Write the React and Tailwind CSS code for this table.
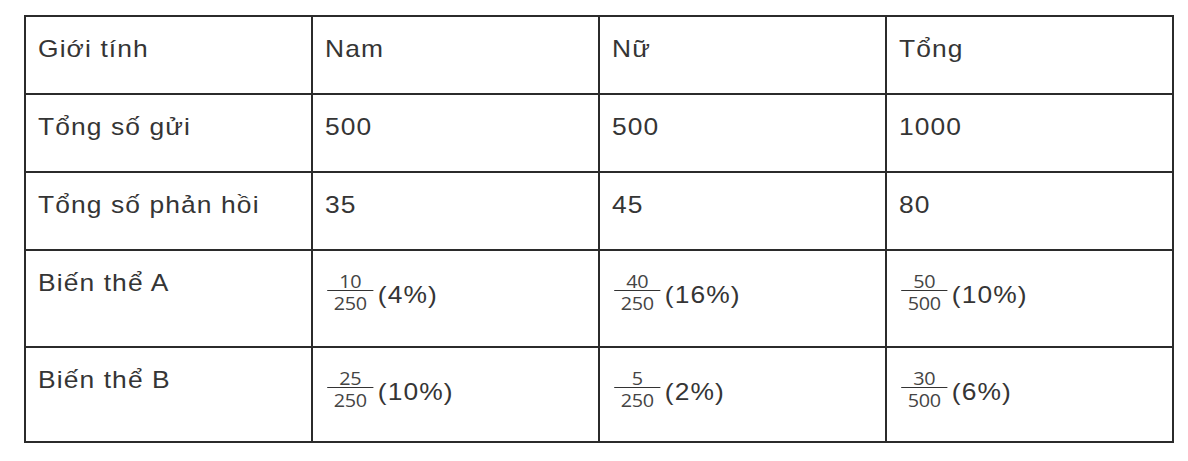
import React from "react";

const font = { fontFamily: '"Liberation Sans", Arial, sans-serif' };

function Frac({ n, d }) {
  return (
    <span className="mt-[3px] ml-[2px] inline-flex flex-col items-stretch font-['Open_Sans',sans-serif] text-[18px] tracking-[-0.3px] text-[#444]">
      <span className="px-[6px] text-center leading-[18px]">{n}</span>
      <span className="border-t border-[#333] px-[6px] pt-[3px] text-center leading-[18px]">{d}</span>
    </span>
  );
}

function FracCell({ n, d, pct }) {
  return (
    <div className="flex items-start">
      <Frac n={n} d={d} />
      <span className="ml-[4px] mt-[12px] leading-[27.6px]">{pct}</span>
    </div>
  );
}

const rows = [
  { h: "h-[78px]", cells: ["Giới tính", "Nam", "Nữ", "Tổng"] },
  { h: "h-[78px]", cells: ["Tổng số gửi", "500", "500", "1000"] },
  { h: "h-[78px]", cells: ["Tổng số phản hồi", "35", "45", "80"] },
  {
    h: "h-[97px]",
    cells: [
      "Biến thể A",
      <FracCell n="10" d="250" pct="(4%)" />,
      <FracCell n="40" d="250" pct="(16%)" />,
      <FracCell n="50" d="500" pct="(10%)" />,
    ],
  },
  {
    h: "h-[95px]",
    cells: [
      "Biến thể B",
      <FracCell n="25" d="250" pct="(10%)" />,
      <FracCell n="5" d="250" pct="(2%)" />,
      <FracCell n="30" d="500" pct="(6%)" />,
    ],
  },
];

export default function App() {
  return (
    <div className="h-[461px] w-[1188px] bg-white pt-[15px] pl-[24px]" style={font}>
      <table className="w-[1150px] table-fixed border-collapse text-[24px] tracking-[1px] text-[#353535]">
        <tbody>
          {rows.map((r, i) => (
            <tr key={i}>
              {r.cells.map((c, j) => (
                <td
                  key={j}
                  className={`${r.h} border-2 border-[#2b2b2b] pl-[12px] pt-[18px] align-top leading-[27.6px]`}
                >
                  <div className="origin-left scale-x-110">{c}</div>
                </td>
              ))}
            </tr>
          ))}
        </tbody>
      </table>
    </div>
  );
}
